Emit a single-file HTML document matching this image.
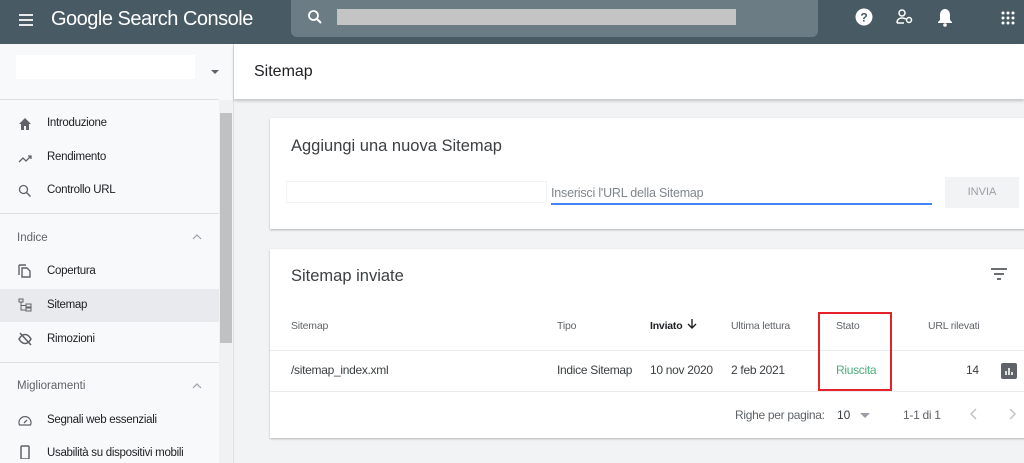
<!DOCTYPE html>
<html><head><meta charset="utf-8"><style>
*{margin:0;padding:0;box-sizing:border-box}
body{width:1024px;height:463px;overflow:hidden;font-family:"Liberation Sans",Arial,sans-serif;background:#f1f3f4;position:relative;color:#202124}
.a{position:absolute}
.hdr{left:0;top:0;width:1024px;height:44px;background:#485a64}
.side{left:0;top:44px;width:234px;height:419px;background:#f8f9fa;border-right:1px solid #e0e0e0}
.it{position:absolute;left:47px;font-size:11.5px;color:#202124;letter-spacing:-0.3px}
.sec{position:absolute;left:17px;font-size:11.5px;color:#5f6368}
.ic{position:absolute;left:18px;width:14px;height:14px}
.card{background:#fff;box-shadow:0 1px 2px rgba(0,0,0,.25)}
.th{position:absolute;top:320px;font-size:10.5px;color:#5f6368;letter-spacing:-0.2px}
.td{position:absolute;top:363px;font-size:12px;color:#3c4043;letter-spacing:-0.3px}
</style></head><body>
<div class="a hdr"></div>
<svg class="a" style="left:18px;top:13px" width="16" height="14"><path d="M1 2h14M1 7h14M1 12h14" stroke="#fff" stroke-width="1.8"/></svg>
<div class="a" style="left:51px;top:8px;font-size:20px;color:#fff;letter-spacing:-0.5px">Google Search Console</div>
<div class="a" style="left:291px;top:0;width:527px;height:37px;background:#6b7c85;border-radius:0 0 6px 6px"></div>
<svg class="a" style="left:307px;top:9px" width="16" height="16"><circle cx="6.5" cy="6.5" r="4.5" stroke="#fff" stroke-width="1.8" fill="none"/><path d="M10 10l4 4" stroke="#fff" stroke-width="2"/></svg>
<div class="a" style="left:337px;top:9px;width:399px;height:16px;background:#c4c4c4"></div>
<svg class="a" style="left:855px;top:8px" width="18" height="18"><circle cx="9" cy="9" r="8.5" fill="#fff"/><text x="9" y="13.5" font-size="12" font-weight="bold" text-anchor="middle" fill="#485a64" font-family="Liberation Sans">?</text></svg>
<svg class="a" style="left:896px;top:9px" width="18" height="16"><circle cx="6" cy="4" r="3" stroke="#fff" stroke-width="1.5" fill="none"/><path d="M1 14c0-4 3-5 5-5s3 .5 4 1M1 14h7" stroke="#fff" stroke-width="1.5" fill="none"/><circle cx="13" cy="11" r="2.5" stroke="#fff" stroke-width="1.5" fill="none"/></svg>
<svg class="a" style="left:937px;top:8px" width="16" height="19"><path d="M8 1c-3 0-5 2.5-5 6v5l-2 2v1h14v-1l-2-2V7c0-3.5-2-6-5-6z" fill="#fff"/><circle cx="8" cy="17" r="1.8" fill="#fff"/></svg>
<svg class="a" style="left:1001px;top:11px" width="14" height="14" fill="#fff"><circle cx="2" cy="2" r="1.5"/><circle cx="7" cy="2" r="1.5"/><circle cx="12" cy="2" r="1.5"/><circle cx="2" cy="7" r="1.5"/><circle cx="7" cy="7" r="1.5"/><circle cx="12" cy="7" r="1.5"/><circle cx="2" cy="12" r="1.5"/><circle cx="7" cy="12" r="1.5"/><circle cx="12" cy="12" r="1.5"/></svg>

<div class="a side"></div>
<div class="a" style="left:16px;top:55px;width:179px;height:24px;background:#fff"></div>
<div class="a" style="left:211px;top:70px;border-left:4px solid transparent;border-right:4px solid transparent;border-top:4px solid #5f6368"></div>
<div class="a" style="left:0;top:99px;width:219px;height:1px;background:#e0e0e0"></div>
<div class="a" style="left:219px;top:100px;width:14px;height:363px;background:#f1f1f1"></div>
<div class="a" style="left:220px;top:113px;width:12px;height:230px;background:#c1c1c1"></div>
<div class="a" style="left:0;top:289px;width:219px;height:33px;background:#e8eaed"></div>
<div class="a" style="left:0;top:213px;width:219px;height:1px;background:#e0e0e0"></div>
<div class="a" style="left:0;top:362px;width:219px;height:1px;background:#e0e0e0"></div>

<svg class="ic" style="top:117px" viewBox="0 0 14 14"><path d="M7 1L1 7h2v6h3V9h2v4h3V7h2z" fill="#5f6368"/></svg>
<div class="it" style="top:117px">Introduzione</div>
<svg class="ic" style="top:151px" viewBox="0 0 14 14"><path d="M1 11l4-4 3 3 5-5M10 5h3v3" stroke="#5f6368" stroke-width="1.3" fill="none"/></svg>
<div class="it" style="top:151px">Rendimento</div>
<svg class="ic" style="top:184px" viewBox="0 0 14 14"><circle cx="5.5" cy="5.5" r="4" stroke="#5f6368" stroke-width="1.3" fill="none"/><path d="M8.5 8.5l4 4" stroke="#5f6368" stroke-width="1.4"/></svg>
<div class="it" style="top:184px">Controllo URL</div>
<div class="sec" style="top:232px">Indice</div>
<svg class="a" style="left:192px;top:234px" width="10" height="6"><path d="M1 5l4-4 4 4" stroke="#9aa0a6" stroke-width="1.2" fill="none"/></svg>
<svg class="ic" style="top:264px" viewBox="0 0 14 14"><path d="M1 1v10M1 1h7M4 4h5l3 3v6H4z" stroke="#5f6368" stroke-width="1.4" fill="none"/></svg>
<div class="it" style="top:265px">Copertura</div>
<svg class="ic" style="top:298px" viewBox="0 0 14 14"><rect x="1" y="1" width="4" height="3" stroke="#5f6368" fill="none"/><rect x="8" y="6" width="5" height="3" stroke="#5f6368" fill="none"/><rect x="8" y="10" width="5" height="3" stroke="#5f6368" fill="none"/><path d="M3 4v8h5M3 7.5h5" stroke="#5f6368" fill="none"/></svg>
<div class="it" style="top:299px">Sitemap</div>
<svg class="ic" style="top:332px" viewBox="0 0 14 14"><path d="M1 7c2-3.5 4-4.5 6-4.5s4 1 6 4.5c-2 3.5-4 4.5-6 4.5S3 10.5 1 7z" stroke="#5f6368" stroke-width="1.5" fill="none"/><path d="M2 1l11 12" stroke="#5f6368" stroke-width="1.6"/></svg>
<div class="it" style="top:333px">Rimozioni</div>
<div class="sec" style="top:380px">Miglioramenti</div>
<svg class="a" style="left:192px;top:383px" width="10" height="6"><path d="M1 5l4-4 4 4" stroke="#9aa0a6" stroke-width="1.2" fill="none"/></svg>
<svg class="ic" style="top:414px" viewBox="0 0 14 14"><path d="M1.5 11A6 6 0 1 1 12.5 11z" stroke="#5f6368" stroke-width="1.2" fill="none"/><path d="M6 9l3-3" stroke="#5f6368" stroke-width="1.3"/></svg>
<div class="it" style="top:414px">Segnali web essenziali</div>
<svg class="ic" style="top:445px" viewBox="0 0 14 14"><rect x="3" y="1" width="8" height="13" rx="1" stroke="#5f6368" stroke-width="1.5" fill="none"/></svg>
<div class="it" style="top:447px">Usabilità su dispositivi mobili</div>

<div class="a" style="left:234px;top:44px;width:790px;height:55px;background:#fff;box-shadow:0 2px 3px rgba(0,0,0,.2)"></div>
<div class="a" style="left:254px;top:63px;font-size:16px;color:#202124">Sitemap</div>

<div class="a card" style="left:270px;top:118px;width:760px;height:111px"></div>
<div class="a" style="left:291px;top:137px;font-size:16.5px;color:#3c4043">Aggiungi una nuova Sitemap</div>
<div class="a" style="left:286px;top:181px;width:261px;height:22px;border:1px solid #f1f3f4"></div>
<div class="a" style="left:551px;top:186px;font-size:12.5px;color:#80868b;letter-spacing:-0.2px">Inserisci l'URL della Sitemap</div>
<div class="a" style="left:551px;top:203px;width:381px;height:2px;background:#4285f4"></div>
<div class="a" style="left:945px;top:177px;width:74px;height:31px;background:#f1f3f4;font-size:11px;color:#9aa0a6;text-align:center;line-height:31px">INVIA</div>

<div class="a card" style="left:270px;top:249px;width:760px;height:189px"></div>
<div class="a" style="left:291px;top:267px;font-size:16.5px;color:#3c4043">Sitemap inviate</div>
<svg class="a" style="left:991px;top:268px" width="16" height="12"><path d="M0 1h16M3 6h10M6 11h4" stroke="#3c4043" stroke-width="1.6"/></svg>
<div class="th" style="left:291px">Sitemap</div>
<div class="th" style="left:557px">Tipo</div>
<div class="th" style="left:650px;color:#202124;font-weight:bold">Inviato</div>
<svg class="a" style="left:687px;top:318px" width="10" height="12"><path d="M5 1v9M1 6l4 4 4-4" stroke="#202124" stroke-width="1.4" fill="none"/></svg>
<div class="th" style="left:731px">Ultima lettura</div>
<div class="th" style="left:836px">Stato</div>
<div class="th" style="left:928px">URL rilevati</div>
<div class="a" style="left:270px;top:350px;width:754px;height:1px;background:#e8eaed"></div>
<div class="td" style="left:291px">/sitemap_index.xml</div>
<div class="td" style="left:557px">Indice Sitemap</div>
<div class="td" style="left:650px">10 nov 2020</div>
<div class="td" style="left:731px">2 feb 2021</div>
<div class="td" style="left:836px;color:#4caf7d">Riuscita</div>
<div class="td" style="left:966px">14</div>
<svg class="a" style="left:1001px;top:363px" width="16" height="16"><rect width="16" height="16" rx="2" fill="#5f6368"/><path d="M5 12V8M8 12V5M11 12V9" stroke="#fff" stroke-width="1.6"/></svg>
<div class="a" style="left:270px;top:391px;width:754px;height:1px;background:#e8eaed"></div>
<div class="a" style="left:735px;top:408px;font-size:12px;color:#5f6368;letter-spacing:-0.3px">Righe per pagina:</div>
<div class="a" style="left:837px;top:408px;font-size:12px;color:#3c4043">10</div>
<div class="a" style="left:860px;top:413px;border-left:5px solid transparent;border-right:5px solid transparent;border-top:5px solid #9aa0a6"></div>
<div class="a" style="left:903px;top:408px;font-size:12px;color:#5f6368;letter-spacing:-0.3px">1-1 di 1</div>
<svg class="a" style="left:970px;top:408px" width="8" height="12"><path d="M6 1L1 6l5 5" stroke="#bdc1c6" stroke-width="1.4" fill="none"/></svg>
<svg class="a" style="left:1008px;top:408px" width="8" height="12"><path d="M2 1l5 5-5 5" stroke="#bdc1c6" stroke-width="1.4" fill="none"/></svg>
<div class="a" style="left:818px;top:312px;width:74px;height:79px;border:2px solid #e52229"></div>
</body></html>
